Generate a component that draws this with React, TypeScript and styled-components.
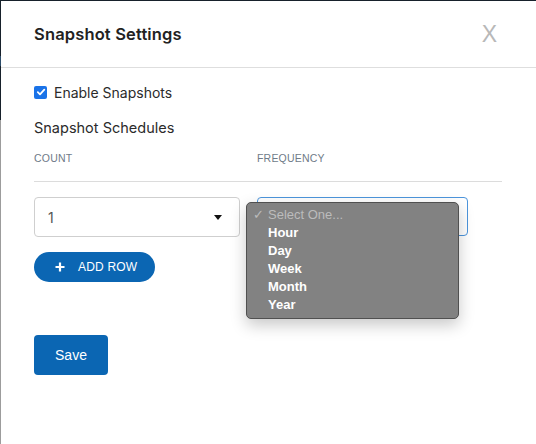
import React from "react";
import styled, { createGlobalStyle } from "styled-components";

const GlobalStyle = createGlobalStyle`
  html, body { margin: 0; padding: 0; }
  body { font-family: "Inter", "Liberation Sans", sans-serif; }
  * { box-sizing: border-box; }
`;

const Frame = styled.div`
  width: 536px;
  height: 444px;
  padding: 1px 0 0 1px;
  background: linear-gradient(to bottom, #17212b 0, #17212b 56px, #2d4d6a 56px, #2d4d6a 66px, #17212b 66px, #17212b 120px, #9c9c9c 120px);
  overflow: hidden;
`;

const Modal = styled.div`
  background: #fff;
  height: 443px;
  display: flex;
  flex-direction: column;
`;

const Header = styled.header`
  height: 67px;
  border-bottom: 1px solid #dedede;
  display: flex;
  align-items: center;
  justify-content: space-between;
  padding: 0 39px 0 33px;
`;

const Title = styled.h2`
  margin: 0;
  font-family: "Inter", sans-serif;
  font-size: 16.5px;
  font-weight: 600;
  color: #222;
  letter-spacing: 0.15px;
`;

const Close = styled.button`
  border: none;
  background: none;
  padding: 0;
  font-family: "Liberation Sans", sans-serif;
  font-size: 23px;
  font-weight: 300;
  color: #b8b8b8;
  line-height: 1;
  cursor: pointer;
`;

const Body = styled.div`
  padding: 0 33px;
  display: flex;
  flex-direction: column;
  align-items: flex-start;
`;

const CheckRow = styled.label`
  margin-top: 16px;
  height: 16px;
  display: flex;
  align-items: center;
  gap: 7px;
  font-size: 14px;
  color: #2b2b2b;
`;

const Box = styled.span`
  width: 13px;
  height: 13px;
  border-radius: 2px;
  background: #1a73e8;
  display: flex;
  align-items: center;
  justify-content: center;
`;

const SectionTitle = styled.div`
  margin-top: 18px;
  line-height: 20px;
  font-size: 14.5px;
  color: #2b2b2b;
`;

const Columns = styled.div`
  margin-top: 13px;
  display: grid;
  grid-template-columns: 206px 211px;
  column-gap: 17px;
  width: 100%;
`;

const ColHead = styled.div`
  font-family: "Liberation Sans", sans-serif;
  font-size: 10.5px;
  line-height: 14px;
  color: #6f7b88;
  letter-spacing: 0.2px;
`;

const Divider = styled.hr`
  margin: 16px 0 0;
  border: none;
  border-top: 1px solid #dcdcdc;
  width: 468px;
`;

const Row = styled.div`
  margin-top: 15px;
  position: relative;
  display: grid;
  grid-template-columns: 206px 211px;
  column-gap: 17px;
`;

const SelectBox = styled.div<{ $focused?: boolean }>`
  height: ${(p) => (p.$focused ? "39px" : "40px")};
  border: 1px solid ${(p) => (p.$focused ? "#4d95dc" : "#cfcfcf")};
  border-radius: 4px;
  display: flex;
  align-items: center;
  justify-content: space-between;
  padding: 0 17px 0 13px;
  font-size: 14px;
  color: #555;
  background: #fff;
`;

const Caret = styled.span`
  width: 0;
  height: 0;
  border-left: 4px solid transparent;
  border-right: 4px solid transparent;
  border-top: 5px solid #111;
`;

const Menu = styled.div`
  position: absolute;
  left: 212px;
  top: 5px;
  width: 213px;
  height: 117px;
  background: #828282;
  border: 1px solid #505050;
  border-radius: 5px;
  box-shadow: 0 6px 16px rgba(0, 0, 0, 0.22);
  padding-top: 3px;
  font-family: "Liberation Sans", sans-serif;
  font-size: 13px;
  font-weight: 700;
`;

const MenuItem = styled.div<{ $placeholder?: boolean }>`
  position: relative;
  height: 18px;
  line-height: 18px;
  padding-left: 21px;
  color: ${(p) => (p.$placeholder ? "#bcbcbc" : "#fff")};
  font-weight: ${(p) => (p.$placeholder ? 400 : 700)};
`;

const Check = styled.span`
  position: absolute;
  left: 6px;
  top: 0;
  color: #bcbcbc;
  font-weight: 400;
`;

const AddRow = styled.button`
  margin-top: 15px;
  width: 121px;
  height: 30px;
  border: none;
  border-radius: 15px;
  background: #0b66b3;
  color: #fff;
  display: flex;
  align-items: center;
  padding: 0 0 0 21px;
  gap: 13px;
  font-family: "Liberation Sans", sans-serif;
  font-size: 12px;
  font-weight: 400;
  letter-spacing: 0.2px;
  cursor: pointer;
`;

const SaveButton = styled.button`
  margin-top: 53px;
  width: 74px;
  height: 40px;
  border: none;
  border-radius: 4px;
  background: #0b66b3;
  color: #fff;
  font-family: "Liberation Sans", sans-serif;
  font-size: 14px;
  cursor: pointer;
`;

export default function App() {
  return (
    <>
      <GlobalStyle />
      <Frame>
        <Modal>
          <Header>
            <Title>Snapshot Settings</Title>
            <Close>X</Close>
          </Header>
          <Body>
            <CheckRow>
              <Box>
                <svg width="10" height="10" viewBox="0 0 10 10">
                  <path d="M1.8 5.2 L4 7.3 L8.3 2.6" fill="none" stroke="#fff" strokeWidth="1.8" strokeLinecap="round" strokeLinejoin="round" />
                </svg>
              </Box>
              Enable Snapshots
            </CheckRow>
            <SectionTitle>Snapshot Schedules</SectionTitle>
            <Columns>
              <ColHead>COUNT</ColHead>
              <ColHead>FREQUENCY</ColHead>
            </Columns>
            <Divider />
            <Row>
              <SelectBox>
                1
                <Caret />
              </SelectBox>
              <SelectBox $focused />
              <Menu>
                <MenuItem $placeholder>
                  <Check>✓</Check>Select One...
                </MenuItem>
                <MenuItem>Hour</MenuItem>
                <MenuItem>Day</MenuItem>
                <MenuItem>Week</MenuItem>
                <MenuItem>Month</MenuItem>
                <MenuItem>Year</MenuItem>
              </Menu>
            </Row>
            <AddRow>
              <svg width="10" height="10" viewBox="0 0 10 10">
                <path d="M5 0.5 V9.5 M0.5 5 H9.5" stroke="#fff" strokeWidth="2.2" />
              </svg>
              ADD ROW
            </AddRow>
            <SaveButton>Save</SaveButton>
          </Body>
        </Modal>
      </Frame>
    </>
  );
}
